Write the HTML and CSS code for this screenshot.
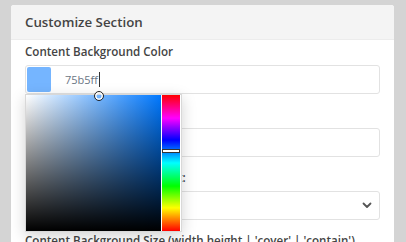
FILE: index.html
```html
<!DOCTYPE html>
<html>
<head>
<meta charset="utf-8">
<link rel="stylesheet" href="styles.css">
</head>
<body>
<div class="card">
  <div class="card-header">Customize Section</div>
  <div class="card-body">
    <div class="group picker-host">
      <label class="label">Content Background Color</label>
      <div class="field color-field">
        <span class="swatch"></span>
        <span class="value">75b5ff</span><span class="caret"></span>
      </div>
      <div class="picker">
        <div class="sv">
          <span class="sv-handle"></span>
        </div>
        <div class="hue">
          <span class="hue-handle"></span>
        </div>
      </div>
    </div>
    <div class="group">
      <label class="label">Content Background Image</label>
      <div class="field"></div>
    </div>
    <div class="group">
      <label class="label">Content Background Repeat:</label>
      <div class="field select">
        <svg class="chev" width="10" height="7" viewBox="0 0 10 7"><path d="M1.5 1.5 L5 5 L8.5 1.5" fill="none" stroke="#555" stroke-width="1.8" stroke-linecap="round" stroke-linejoin="round"/></svg>
      </div>
    </div>
    <div class="group">
      <label class="label">Content Background Size (width height | 'cover' | 'contain')</label>
      <div class="field"></div>
    </div>
  </div>
</div>
</body>
</html>
```

FILE: styles.css
```css
html, body {
  margin: 0;
  padding: 0;
}
body {
  background: #d4d4d4;
  font-family: "Open Sans", "Liberation Sans", sans-serif;
  padding: 5px 12px 0 11px;
  height: 242px;
  overflow: hidden;
  box-sizing: border-box;
}
.card {
  background: #fff;
  border-radius: 3px;
  min-height: 400px;
}
.card-header {
  background: #f4f4f4;
  border-bottom: 1px solid #ececec;
  border-radius: 3px 3px 0 0;
  height: 35px;
  box-sizing: border-box;
  padding: 0 14px;
  display: flex;
  align-items: center;
  font-size: 13.3px;
  font-weight: 600;
  color: #444;
}
.card-body {
  padding: 3px 14px 0 14px;
}
.group {
  margin-bottom: 12px;
}
.picker-host {
  position: relative;
}
.label {
  display: block;
  font-size: 11.6px;
  font-weight: 600;
  color: #444;
  line-height: 18px;
  margin-bottom: 4px;
}
.field {
  height: 29px;
  border: 1px solid #e2e2e2;
  border-radius: 3px;
  box-sizing: border-box;
  background: #fff;
}
.color-field {
  display: flex;
  align-items: center;
  padding: 1px;
}
.swatch {
  width: 24px;
  height: 25px;
  border-radius: 2px;
  background: #75b5ff;
}
.value {
  margin-left: 14px;
  font-size: 11px;
  color: #6b7684;
}
.caret {
  width: 1px;
  height: 15px;
  margin-left: 1px;
  background: #333;
}
.select {
  display: flex;
  align-items: center;
  justify-content: flex-end;
  padding-right: 7px;
}
.picker {
  position: absolute;
  left: 0;
  top: 51px;
  display: flex;
  gap: 1px;
  padding-right: 1px;
  background: #fff;
  border: 1px solid #d8d8d8;
  box-shadow: 0 4px 14px rgba(0, 0, 0, 0.18);
  z-index: 5;
}
.sv {
  position: relative;
  width: 135px;
  height: 136px;
  background:
    linear-gradient(to top, #000, rgba(0, 0, 0, 0)),
    linear-gradient(to right, #fff, rgba(255, 255, 255, 0)),
    #0078ff;
}
.sv-handle {
  position: absolute;
  left: 68px;
  top: -4px;
  width: 8px;
  height: 8px;
  border: 1.5px solid #222;
  border-radius: 50%;
  box-shadow: inset 0 0 0 1.5px #fff;
}
.hue {
  position: relative;
  width: 18px;
  height: 136px;
  background: linear-gradient(to bottom, #ff0000 0%, #ff00ff 17%, #0000ff 33%, #00ffff 50%, #00ff00 67%, #ffff00 83%, #ff0000 100%);
}
.hue-handle {
  position: absolute;
  left: 0;
  top: 54px;
  width: 18px;
  height: 4px;
  box-sizing: border-box;
  border: 1px solid #333;
  background: #fff;
}
```
